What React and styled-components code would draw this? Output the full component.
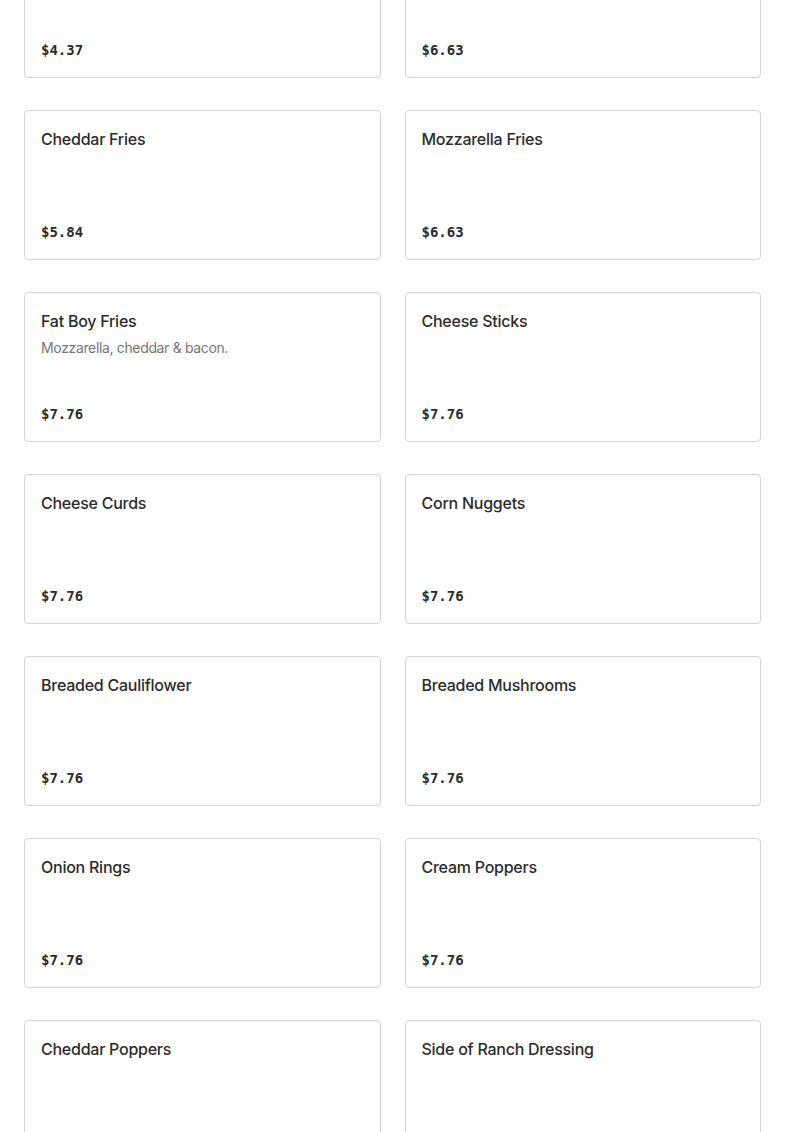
import styled, { createGlobalStyle } from "styled-components";

const items = [
    { name: 'French Fries', price: '$4.37' },
    { name: 'Poutine', price: '$6.63' },
    { name: 'Cheddar Fries', price: '$5.84' },
    { name: 'Mozzarella Fries', price: '$6.63' },
    { name: 'Fat Boy Fries', desc: 'Mozzarella, cheddar & bacon.', price: '$7.76' },
    { name: 'Cheese Sticks', price: '$7.76' },
    { name: 'Cheese Curds', price: '$7.76' },
    { name: 'Corn Nuggets', price: '$7.76' },
    { name: 'Breaded Cauliflower', price: '$7.76' },
    { name: 'Breaded Mushrooms', price: '$7.76' },
    { name: 'Onion Rings', price: '$7.76' },
    { name: 'Cream Poppers', price: '$7.76' },
    { name: 'Cheddar Poppers', price: '$7.76' },
    { name: 'Side of Ranch Dressing', price: '$0.79' },
];

const App = () => {
    return (
        <>
            <GlobalStyle />
            <Page>
                <Grid>
                    {items.map((item) => (
                        <Card key={item.name}>
                            <Title>{item.name}</Title>
                            {item.desc && <Desc>{item.desc}</Desc>}
                            <Price>{item.price}</Price>
                        </Card>
                    ))}
                </Grid>
            </Page>
        </>
    );
};

const GlobalStyle = createGlobalStyle`
    body {
        margin: 0;
        background: #fff;
        font-family: Inter, "Noto Sans", sans-serif;
        overflow: hidden;
    }
`;

const Page = styled.div`
    padding: 0 24px;
    height: 1132px;
    overflow: hidden;
`;

const Grid = styled.div`
    display: grid;
    grid-template-columns: 1fr 1fr;
    column-gap: 24px;
    row-gap: 32px;
    margin-top: -72px;
`;

const Card = styled.div`
    display: flex;
    flex-direction: column;
    box-sizing: border-box;
    height: 150px;
    padding: 16px;
    border: 1px solid #d4d4d4;
    border-radius: 4px;
    background: #fff;
`;

const Title = styled.p`
    margin: 0;
    color: #2b2b2b;
    font-size: 16px;
    font-weight: 500;
    line-height: 24px;
    letter-spacing: -0.25px;
`;

const Desc = styled.p`
    margin: 5px 0 0 0;
    color: #767676;
    font-size: 14px;
    font-weight: 400;
    line-height: 20px;
    letter-spacing: -0.35px;
`;

const Price = styled.p`
    margin: auto 0 0 0;
    color: #2b2b2b;
    font-family: "DejaVu Sans Mono", "Liberation Mono", monospace;
    font-size: 14px;
    font-weight: 700;
    line-height: 22px;
`;

export default App;
